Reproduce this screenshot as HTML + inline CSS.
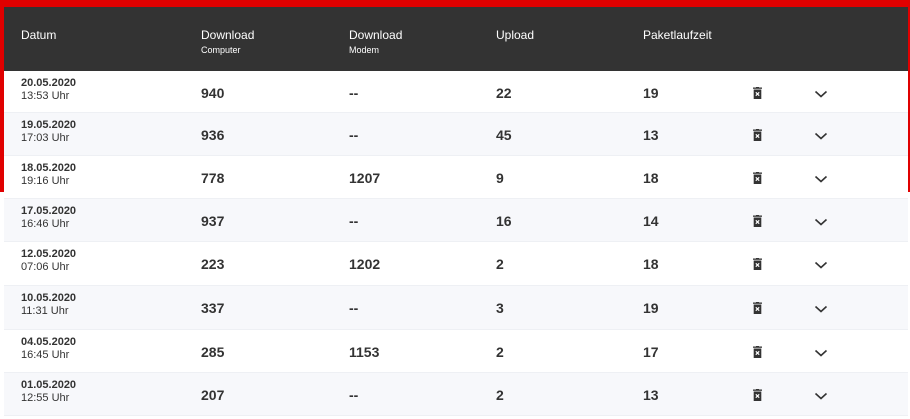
<!DOCTYPE html>
<html><head><style>
*{margin:0;padding:0;box-sizing:border-box}
body{width:910px;height:419px;background:#fff;position:relative;overflow:hidden;font-family:"Liberation Sans",Arial,sans-serif;color:#333}
.red{position:absolute;left:0;top:0;width:910px;height:192px;background:#e00000}
.tbl{position:absolute;left:4px;top:7px;width:904px;height:412px;background:#fff}
.hd{position:absolute;left:0;top:0;width:904px;height:64px;background:#333;color:#fff}
.hd div{position:absolute;top:21px;font-size:12px}
.hd small{display:block;font-size:9px;margin-top:3px}
.row{position:absolute;left:0;width:904px;height:43px;border-bottom:1px solid #eef0f4}
.row.alt{background:#f7f8fb}
.row div{position:absolute}
.d{left:17px;top:6px;font-size:11px;line-height:13px}
.d b{display:block}
.v{top:14px;font-size:14px;font-weight:bold}
.tr{left:749px;top:15px;width:9px;height:12px}
.ch{left:810px;top:15px;width:14px;height:10px}
</style></head><body>
<div class="red"></div>
<div class="tbl">
<div class="hd">
<div style="left:17px">Datum</div>
<div style="left:197px">Download<small>Computer</small></div>
<div style="left:345px">Download<small>Modem</small></div>
<div style="left:492px">Upload</div>
<div style="left:639px">Paketlaufzeit</div>
</div>
</div>
<div id="rows" style="position:absolute;left:4px;top:71px"></div>
<script>
var d=[["20.05.2020","13:53",940,"--",22,19],["19.05.2020","17:03",936,"--",45,13],["18.05.2020","19:16",778,"1207",9,18],["17.05.2020","16:46",937,"--",16,14],["12.05.2020","07:06",223,"1202",2,18],["10.05.2020","11:31",337,"--",3,19],["04.05.2020","16:45",285,"1153",2,17],["01.05.2020","12:55",207,"--",2,13]];
var tops=[0,42,85,128,171,215,259,302];var h="";
var trash='<svg width="9" height="12" viewBox="0 0 9 12"><rect x="0" y="0.5" width="9" height="1.3" fill="#333"/><rect x="3" y="0" width="3" height="1" fill="#333"/><rect x="0.7" y="2.5" width="7.6" height="9.5" fill="#333"/><path d="M2.8 5.3L6.2 8.7M6.2 5.3L2.8 8.7" stroke="#fff" stroke-width="1.2"/></svg>';
var chev='<svg width="14" height="10" viewBox="0 0 14 10"><path d="M1.5 2.5L7 7.5L12.5 2.5" fill="none" stroke="#333" stroke-width="1.6"/></svg>';
for(var i=0;i<8;i++){var r=d[i];h+='<div class="row'+(i%2?' alt':'')+'" style="top:'+tops[i]+'px;height:'+((tops[i+1]||345)-tops[i])+'px"><div class="d"><b>'+r[0]+'</b>'+r[1]+' Uhr</div><div class="v" style="left:197px">'+r[2]+'</div><div class="v" style="left:345px">'+r[3]+'</div><div class="v" style="left:492px">'+r[4]+'</div><div class="v" style="left:639px">'+r[5]+'</div><div class="tr">'+trash+'</div><div class="ch">'+chev+'</div></div>';}
document.getElementById("rows").innerHTML=h;
</script>
</body></html>
